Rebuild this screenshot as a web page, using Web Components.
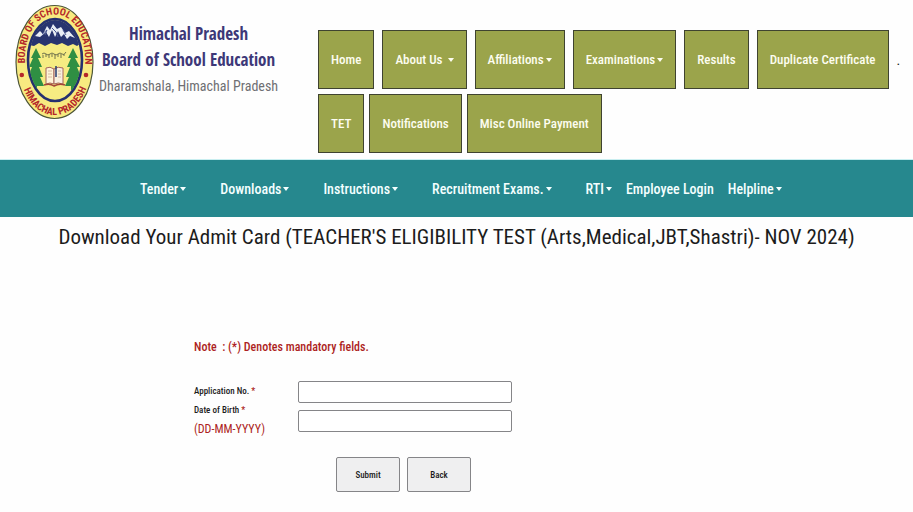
<!DOCTYPE html>
<html lang="en">
<head>
<meta charset="utf-8">
<title>Himachal Pradesh Board of School Education</title>
<style>
body { margin: 0; background: #fefefe; color: #1c1c1c; font-family: "Roboto Condensed", Roboto, "Liberation Sans", sans-serif; }
</style>
</head>
<body>
<admit-page></admit-page>
<script>
const define = (name, html) => customElements.define(name, class extends HTMLElement {
  constructor() {
    super();
    this.attachShadow({ mode: "open" }).innerHTML = html;
  }
});

define("board-seal", `
<style>:host{display:block;flex:none} svg{display:block}
text{font-family:"Roboto Condensed",Roboto,sans-serif;font-weight:700;fill:#b4272a}</style>
<svg width="80" height="116" viewBox="0 0 80 116" role="img" aria-label="Board seal">
  <defs>
    <clipPath id="in"><ellipse cx="40" cy="56" rx="26" ry="40"/></clipPath>
    <path id="top" d="M10.500 65 C7 38 19 10.500 40 10.500 C62 10.500 73 38 69.500 66"/>
    <path id="bot" d="M6.500 79 C19 122 61 122 73.500 78"/>
  </defs>
  <ellipse cx="39.500" cy="58" rx="38.500" ry="56.500" fill="#f8ea80" stroke="#4d5638" stroke-width="1.200"/>
  <ellipse cx="40" cy="56" rx="27" ry="41" fill="#f6ec82" stroke="#25306f" stroke-width="2.600"/>
  <g clip-path="url(#in)">
    <path d="M10 10H70V40L66 39L62 42L58 40L53 42L47 39L42 41L36 39L30 42L24 39L19 42L10 40Z" fill="#28346f"/>
    <path d="M20 32L25 27L28 30L32 22L35 26L38 20L42 25L46 23L50 29L54 27L60 34L55 32L52 35L49 30L46 33L43 27L40 33L37 26L34 33L31 28L25 33Z" fill="#e9edf4"/>
    <path d="M27 30L32 26L30 31M37 24L41 28L43 33M48 26L51 31" stroke="#4b5993" fill="none"/>
    <g fill="#2f8f43">
      <path d="M21 44L26 54L23 54L27 63L24 63L28 73L25 73L29 82H22V86H19V82H12L16 73L13 73L17 63L14 63L18 54L16 54Z"/>
      <path d="M58 44L63 54L60 54L65 63L62 63L66 73L63 73L67 82H59V86H56V82H50L54 73L51 73L55 63L52 63L56 54L53 54Z"/>
    </g>
  </g>
  <path d="M27 50q2-2 4 0t4 0t4 0t4 0t4 0t4-2M28 51v3m3-4v3m3-3v4m3-4v3m3-3v5m3-5v3m3-3v4m3-4v2" stroke="#71734d" stroke-width="1" fill="none"/>
  <path d="M31 64Q35 62 39 65V80Q35 78 31 80Z" fill="#fff4d8" stroke="#a5645a"/>
  <path d="M39 65Q43 62 48 64V80Q43 78 39 80Z" fill="#f7efdf" stroke="#a5645a"/>
  <path d="M33 67h4m-4 3h4m-4 3h4m6-6h3m-3 3h3m-3 3h3" stroke="#d7b9a2" fill="none"/>
  <path d="M41 62V73" stroke="#263b6f" stroke-width="1.500"/>
  <path d="M29 81Q35 79 39 82Q44 79 50 81" stroke="#a54438" stroke-width="1.500" fill="none"/>
  <circle cx="6.800" cy="71" r="2.300" fill="#b4272a"/><circle cx="71" cy="71" r="2.300" fill="#b4272a"/>
  <text font-size="10"><textPath href="#top" startOffset="50%" text-anchor="middle">BOARD OF SCHOOL EDUCATION</textPath></text>
  <text font-size="10"><textPath href="#bot" startOffset="50%" text-anchor="middle">HIMACHAL PRADESH</textPath></text>
</svg>`);

define("site-brand", `
<style>
:host{display:flex;align-items:flex-start;gap:4px;padding:4px 0 0 15px;box-sizing:border-box}
.t{padding-top:17px;text-align:center;white-space:nowrap}
p{margin:0;font:700 17px/26px "Open Sans Condensed","Roboto Condensed",sans-serif;color:#3d3878}
p.s{color:#6f6f73;font:400 14px/26px "Roboto Condensed",Roboto,sans-serif}
</style>
<board-seal></board-seal>
<div class="t"><p>Himachal Pradesh</p><p>Board of School Education</p><p class="s">Dharamshala, Himachal Pradesh</p></div>`);

define("nav-link", `
<style>
:host{display:block}
a{display:flex;align-items:center;gap:2px;color:inherit;text-decoration:none;white-space:nowrap;font-size:var(--size,13px);font-weight:500}
:host([tile]) a{box-sizing:border-box;height:59px;padding:0 12px;background:#9ba44b;border:1px solid #3f4330}
:host([spaced]) a{gap:5px}
i{display:none;border:3px solid transparent;border-top:4px solid currentColor;border-bottom:0}
:host([menu]) i{display:block}
</style>
<a href="#"><slot></slot><i></i></a>`);

define("main-nav", `
<style>
:host{display:block;color:#fdfdf0}
nav{display:flex;flex-direction:column;gap:5px}
div{display:flex;align-items:center;gap:8px}
.b{gap:5px}
span{color:#222;font-size:14px}
</style>
<nav aria-label="Main">
<div><nav-link tile>Home</nav-link><nav-link tile menu spaced>About Us</nav-link><nav-link tile menu>Affiliations</nav-link><nav-link tile menu>Examinations</nav-link><nav-link tile>Results</nav-link><nav-link tile>Duplicate Certificate</nav-link><span>.</span></div>
<div class="b"><nav-link tile>TET</nav-link><nav-link tile>Notifications</nav-link><nav-link tile>Misc Online Payment</nav-link></div>
</nav>`);

define("service-nav", `
<style>
:host{display:block;background:#26888e;color:#f4ffff;border-top:1px solid #c8eef0;--size:14px}
nav{display:flex;align-items:center;height:57px;padding-left:140px;gap:14px}
.w{display:flex;gap:34px}
</style>
<nav aria-label="Services"><div class="w"><nav-link menu>Tender</nav-link><nav-link menu>Downloads</nav-link><nav-link menu>Instructions</nav-link><nav-link menu>Recruitment Exams.</nav-link><nav-link menu>RTI</nav-link></div><nav-link>Employee Login</nav-link><nav-link menu>Helpline</nav-link></nav>`);

define("admit-form", `
<style>
:host{display:block;padding:78px 0 20px 194px}
.note{margin:0 0 22px;font-size:12px;line-height:24px;font-weight:500;color:#ad1f23;white-space:pre}
.g{display:grid;grid-template-columns:104px minmax(0,214px);row-gap:7px;align-items:start}
label{font-size:9px;line-height:20px;font-weight:500;white-space:nowrap}
b{color:#ad1f23;font-weight:500}
.d{margin-top:-10px}
.d span{display:block;color:#ad1f23;font-size:12px;line-height:18px;font-weight:400}
input{box-sizing:border-box;width:100%;height:22px;border:1px solid #858588;border-radius:2px;background:#fff;font:12px "Roboto Condensed",Roboto,sans-serif;padding:1px 4px}
.a{display:flex;gap:7px;padding:19px 0 0 142px}
button{width:64px;height:35px;border:1px solid #858588;border-radius:2px;background:#efeff0;color:#1c1c1c;font:500 9px "Roboto Condensed",Roboto,sans-serif;padding:0}
</style>
<form>
<p class="note">Note  : (*) Denotes mandatory fields.</p>
<div class="g">
<label for="app">Application No. <b>*</b></label><input id="app" type="text">
<label class="d" for="dob">Date of Birth <b>*</b><span>(DD-MM-YYYY)</span></label><input id="dob" type="text">
</div>
<div class="a"><button type="button">Submit</button><button type="button">Back</button></div>
</form>`);

define("admit-page", `
<style>
:host{display:block}
header{display:grid;grid-template-columns:318px minmax(0,1fr);min-height:159px}
main-nav{padding-top:30px}
h1{margin:0;font-size:21px;line-height:40px;font-weight:400;text-align:center}
</style>
<header><site-brand></site-brand><main-nav></main-nav></header>
<service-nav></service-nav>
<main><h1>Download Your Admit Card (TEACHER'S ELIGIBILITY TEST (Arts,Medical,JBT,Shastri)- NOV 2024)</h1>
<admit-form></admit-form></main>`);
</script>
</body>
</html>
